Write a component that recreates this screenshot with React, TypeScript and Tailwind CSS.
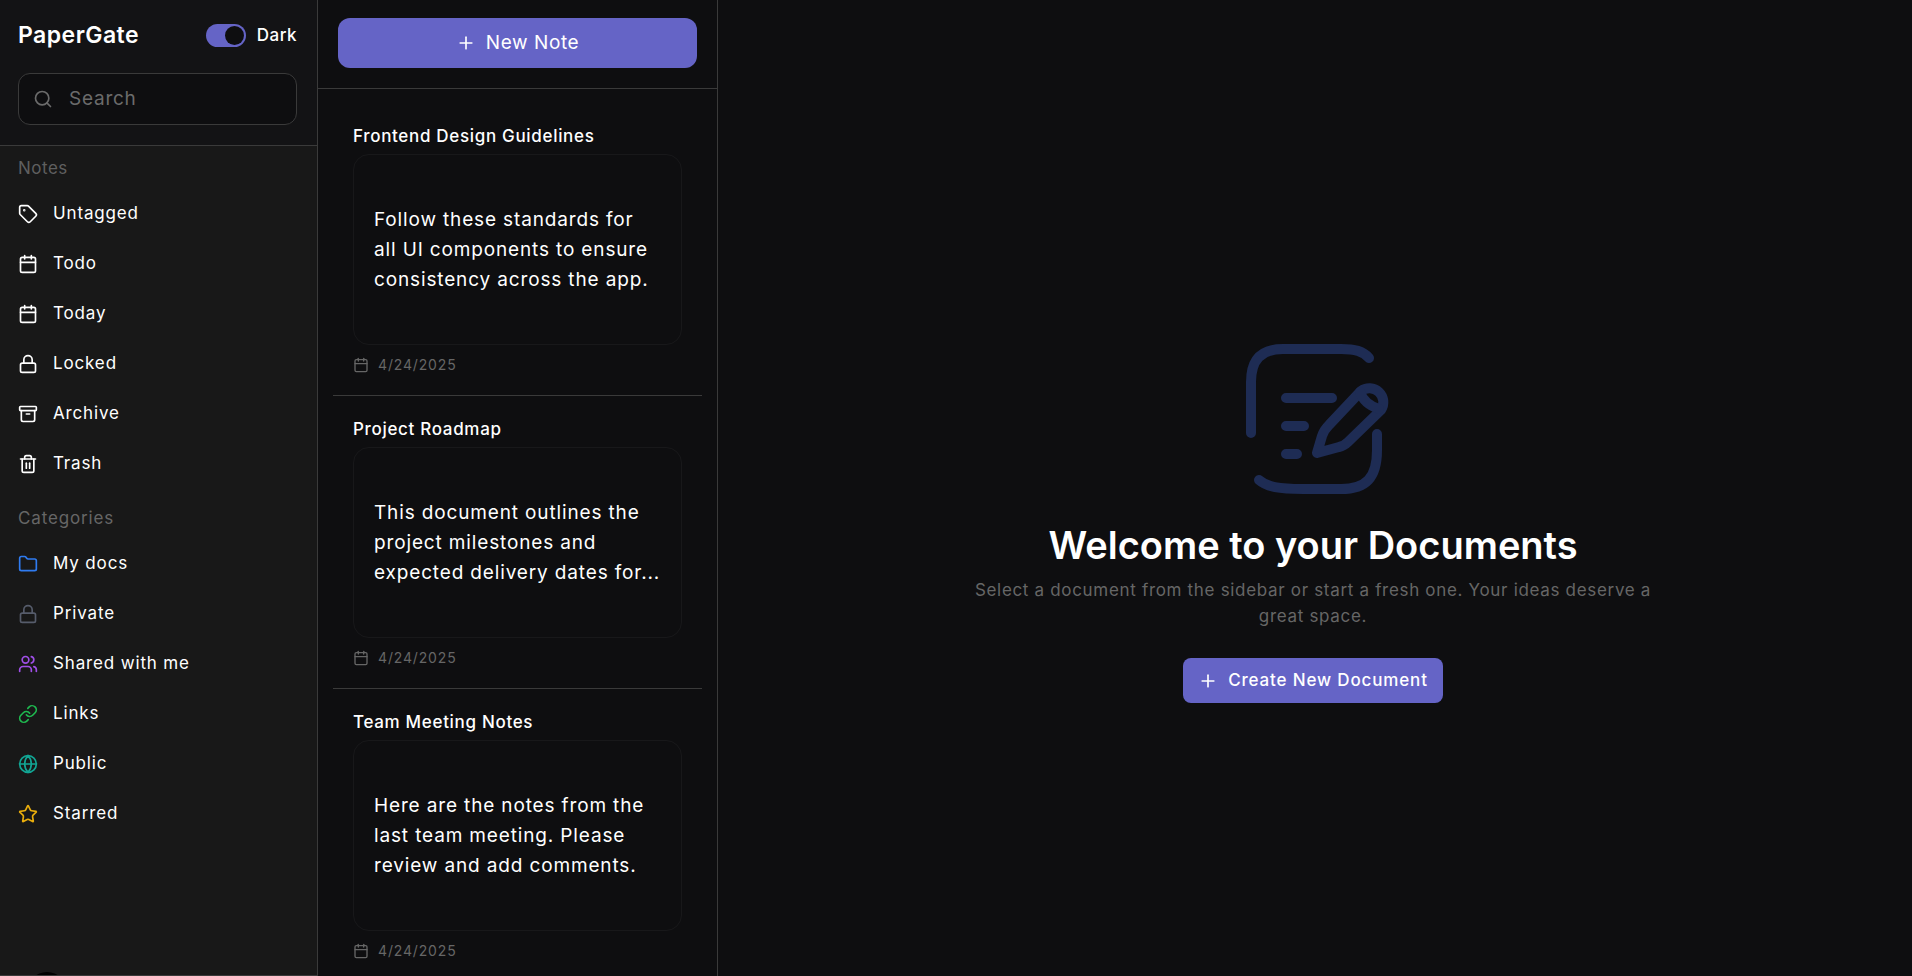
import { Archive, Calendar, Folder, Globe, Link, Lock, Plus, Search, Star, Tag, Trash2, Users } from "lucide-react";

const notesNav = [
  { label: "Untagged", icon: Tag },
  { label: "Todo", icon: Calendar },
  { label: "Today", icon: Calendar },
  { label: "Locked", icon: Lock },
  { label: "Archive", icon: Archive },
  { label: "Trash", icon: Trash2 },
];

const categories = [
  { label: "My docs", icon: Folder, color: "text-[#2f7bf0]" },
  { label: "Private", icon: Lock, color: "text-[#565c6b]" },
  { label: "Shared with me", icon: Users, color: "text-[#a04fe8]" },
  { label: "Links", icon: Link, color: "text-[#1fb84f]" },
  { label: "Public", icon: Globe, color: "text-[#12a594]" },
  { label: "Starred", icon: Star, color: "text-[#eaae0c]" },
];

const notes = [
  {
    title: "Frontend Design Guidelines",
    lines: ["Follow these standards for", "all UI components to ensure", "consistency across the app."],
  },
  {
    title: "Project Roadmap",
    lines: ["This document outlines the", "project milestones and", "expected delivery dates for..."],
  },
  {
    title: "Team Meeting Notes",
    lines: ["Here are the notes from the", "last team meeting. Please", "review and add comments."],
  },
];

function NavRow({ label, icon: Icon, color = "text-white" }: { label: string; icon: typeof Tag; color?: string }) {
  return (
    <div className="flex h-[50px] items-center gap-[15px]">
      <Icon className={`h-5 w-5 shrink-0 ${color}`} />
      <span className="text-[17px] tracking-[0.05em] text-white">{label}</span>
    </div>
  );
}

function NotesIcon() {
  return (
    <svg viewBox="0 0 200 190" className="mr-[5px] h-[190px] w-[200px]" fill="none" stroke="#1e2c54" strokeWidth="10" strokeLinecap="round" strokeLinejoin="round">
      <path d="M40 113V62C40 40 50 29 72 29H130C144 29 152 31 158 38" />
      <path d="M166 114V130C166 158 155 169 130 169H92C68 169 56 167 48 160" />
      <path d="M75 78H121M75 106H93M75 134H86" />
      <path d="M106 133L111 116Q113 110 118 105L150 71A14 14 0 0 1 170 90L137 122Q133 126 128 127Z" />
      <path d="M149 72Q153 84 168 89" />
    </svg>
  );
}

export default function App() {
  return (
    <div className="flex h-[976px] w-[1912px] overflow-hidden bg-[#0e0e10] font-['Inter','Liberation_Sans',sans-serif] text-white">
      <aside className="relative flex w-[318px] shrink-0 flex-col overflow-hidden border-r border-b border-[#3a3a3a] bg-[#181818]">
        <div className="border-b border-[#3a3a3a] bg-[#131315] pt-6 pr-5 pb-[20px] pl-[18px]">
          <div className="flex h-[23px] items-center justify-between">
            <span className="text-[23px] font-semibold tracking-[0.02em]">PaperGate</span>
            <div className="flex items-center gap-[11px]">
              <div className="flex h-[23px] w-10 items-center justify-end rounded-full bg-[#6564c6] p-[2px]">
                <div className="h-[19px] w-[19px] rounded-full bg-[#0e0e10]" />
              </div>
              <span className="text-[17px] font-medium tracking-[0.03em]">Dark</span>
            </div>
          </div>
          <div className="mt-[26px] flex h-[52px] items-center gap-4 rounded-xl border border-[#3a3a3a] bg-[#0e0e10] pl-[14px]">
            <Search className="h-5 w-5 text-[#6b6b6b]" />
            <span className="text-[19px] tracking-[0.04em] text-[#6b6b6b]">Search</span>
          </div>
        </div>
        <div className="px-[18px]">
          <div className="mt-[10px] mb-[7px] text-[17px] tracking-[0.03em] text-[#5f5f5f]">Notes</div>
          {notesNav.map((item) => (
            <NavRow key={item.label} {...item} />
          ))}
          <div className="mt-[17px] mb-[8px] text-[17px] tracking-[0.05em] text-[#666]">Categories</div>
          {categories.map((item) => (
            <NavRow key={item.label} {...item} />
          ))}
        </div>
        <div className="absolute -bottom-[37px] left-[27px] h-10 w-10 rounded-full bg-black" />
      </aside>

      <section className="flex w-[400px] shrink-0 flex-col overflow-hidden border-r border-[#3a3a3a]">
        <div className="border-b border-[#3a3a3a] px-5 pt-[18px] pb-5">
          <div className="flex h-[50px] items-center justify-center gap-[10px] rounded-xl bg-[#6564c6]">
            <Plus className="h-5 w-5" />
            <span className="text-[19px] tracking-[0.03em]">New Note</span>
          </div>
        </div>
        <div className="px-[15px] pt-[14px]">
          {notes.map((note) => (
            <div key={note.title} className="h-[293px] border-b border-[#3a3a3a] px-5 pt-[22px]">
              <h3 className="h-[22px] text-[17px] leading-[22px] font-medium tracking-[0.04em]">{note.title}</h3>
              <div className="mt-[7px] flex h-[191px] flex-col justify-center rounded-2xl border border-[#18181a] px-5">
                {note.lines.map((line) => (
                  <p key={line} className="text-[19px] leading-[30px] tracking-[0.045em] whitespace-nowrap">
                    {line}
                  </p>
                ))}
              </div>
              <div className="mt-[10px] flex h-5 items-center gap-[9px] text-[#666]">
                <Calendar className="h-4 w-4" />
                <span className="text-sm tracking-[0.06em]">4/24/2025</span>
              </div>
            </div>
          ))}
        </div>
      </section>

      <main className="flex flex-1 flex-col items-center pt-[320px] pr-1">
        <NotesIcon />
        <h1 className="mt-[15px] text-[38px] leading-10 font-semibold">Welcome to your Documents</h1>
        <p className="mt-3 w-[700px] text-center text-[17px] leading-[26px] tracking-[0.04em] text-[#666]">
          Select a document from the sidebar or start a fresh one. Your ideas deserve a great space.
        </p>
        <div className="mt-[29px] flex h-[45px] w-[260px] items-center justify-center gap-[10px] rounded-lg bg-[#6564c6]">
          <Plus className="h-5 w-5" />
          <span className="text-[17px] font-medium tracking-[0.05em]">Create New Document</span>
        </div>
      </main>
    </div>
  );
}
